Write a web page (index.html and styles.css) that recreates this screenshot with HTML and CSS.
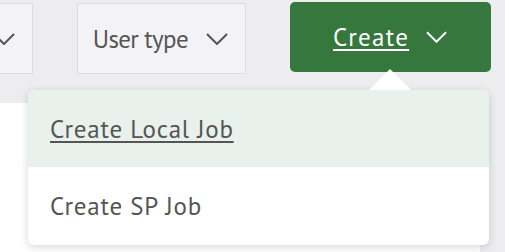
FILE: index.html
```html
<!DOCTYPE html>
<html lang="en">
<head>
    <meta charset="UTF-8">
    <meta name="viewport" content="width=device-width, initial-scale=1.0">
    <title>Jobs</title>
    <link rel="stylesheet" href="styles.css">
</head>
<body>
    <div class="toolbar">
        <div class="filter filter-status">
            <span class="filter-label">Status</span>
            <svg class="chevron" viewBox="0 0 22 12" width="22" height="12"><path d="M1 1 L11 11 L21 1"/></svg>
        </div>
        <div class="filter">
            <span class="filter-label">User type</span>
            <svg class="chevron" viewBox="0 0 22 12" width="22" height="12"><path d="M1 1 L11 11 L21 1"/></svg>
        </div>
        <div class="create">
            <button class="create-btn">
                <span class="create-label">Create</span>
                <svg class="chevron" viewBox="0 0 22 12" width="21" height="12"><path d="M1 1 L11 11 L21 1"/></svg>
            </button>
            <div class="menu">
                <a class="menu-item active" href="#">Create Local Job</a>
                <a class="menu-item" href="#">Create SP Job</a>
            </div>
        </div>
    </div>

    <div class="panel"></div>
</body>
</html>
```

FILE: styles.css
```css
* {
    margin: 0;
    padding: 0;
    box-sizing: border-box;
    font-family: 'PT Sans', 'Roboto', sans-serif;
}

body {
    background: #ededf0;
    height: 252px;
    overflow: hidden;
}

.toolbar {
    display: flex;
    justify-content: flex-end;
    align-items: flex-start;
    gap: 44px;
    padding: 2px 14px 0 0;
}

.filter {
    flex-shrink: 0;
    display: flex;
    align-items: center;
    gap: 18px;
    height: 71px;
    margin-top: 1px;
    padding: 0 17px 0 15px;
    background: #f3f3f5;
    border: 1px solid #dcdcdf;
    color: #555;
    font-size: 25px;
    letter-spacing: -0.65px;
}

.filter-status {
    width: 160px;
    justify-content: flex-end;
}

.filter-status .filter-label {
    display: none;
}

.chevron {
    flex-shrink: 0;
    fill: none;
    stroke: #555;
    stroke-width: 2;
}

.create {
    position: relative;
    flex-shrink: 0;
}

.create-btn {
    display: flex;
    align-items: center;
    gap: 17px;
    width: 201px;
    height: 70px;
    padding: 0 0 0 43px;
    background: #35773d;
    border: none;
    border-radius: 5px;
    color: white;
    font-size: 25px;
    letter-spacing: 1.3px;
    cursor: pointer;
}

.create-label {
    text-decoration: underline;
    text-underline-offset: 3px;
}

.create-btn .chevron {
    stroke: white;
}

.menu {
    position: absolute;
    top: 88px;
    right: 2px;
    width: 461px;
    background: white;
    border-radius: 6px;
    box-shadow: 0 2px 8px rgba(0,0,0,0.16);
    z-index: 2;
}

.menu::before {
    content: '';
    position: absolute;
    top: -21px;
    left: 341px;
    border-left: 21px solid transparent;
    border-right: 21px solid transparent;
    border-bottom: 21px solid white;
}

.menu-item {
    display: flex;
    align-items: center;
    height: 77px;
    padding-left: 22px;
    color: #555;
    font-size: 25px;
    letter-spacing: 0.75px;
    text-decoration: none;
}

.menu-item:first-child {
    border-radius: 6px 6px 0 0;
}

.menu-item:last-child {
    height: 78px;
    border-radius: 0 0 6px 6px;
}

.menu-item.active {
    background: #e8f1eb;
    text-decoration: underline;
    text-underline-offset: 3px;
}

.panel {
    width: 480px;
    height: 149px;
    margin-top: 29px;
    background: white;
}
```
